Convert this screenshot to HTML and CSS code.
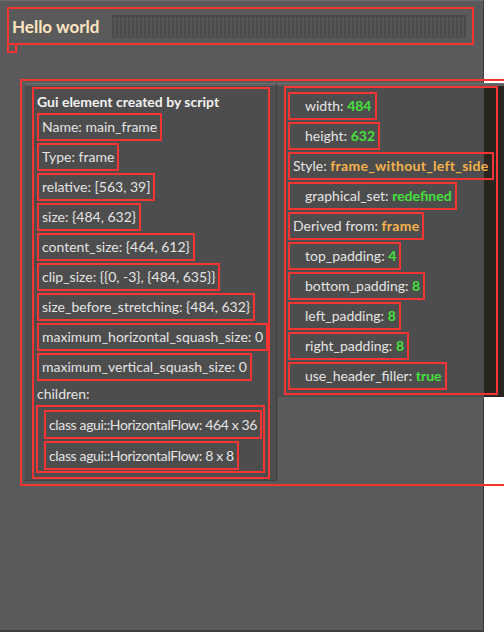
FILE: index.html
```html
<!DOCTYPE html>
<html>
<head>
<meta charset="utf-8">
<link rel="stylesheet" href="styles.css">
</head>
<body>
<div class="frame">
  <div class="titlebar">
    <span class="title">Hello world</span>
    <div class="filler"></div>
  </div>
  <div class="tiny"></div>
  <div class="content">
    <div class="panel panel-left">
      <div class="inner inner-left">
        <div class="header">Gui element created by script</div>
        <div class="row">Name: main_frame</div>
        <div class="row">Type: frame</div>
        <div class="row">relative: [563, 39]</div>
        <div class="row">size: {484, 632}</div>
        <div class="row">content_size: {464, 612}</div>
        <div class="row">clip_size: {{0, -3}, {484, 635}}</div>
        <div class="row">size_before_stretching: {484, 632}</div>
        <div class="row">maximum_horizontal_squash_size: 0</div>
        <div class="row">maximum_vertical_squash_size: 0</div>
        <div class="plain">children:</div>
        <div class="children">
          <div class="row child">class agui::HorizontalFlow: 464 x 36</div>
          <div class="row child">class agui::HorizontalFlow: 8 x 8</div>
        </div>
      </div>
    </div>
    <div class="panel panel-right">
      <div class="inner inner-right">
        <div class="row ind">width: <b class="g">484</b></div>
        <div class="row ind">height: <b class="g">632</b></div>
        <div class="row">Style: <b class="o">frame_without_left_side</b></div>
        <div class="row ind">graphical_set: <b class="g">redefined</b></div>
        <div class="row">Derived from: <b class="o">frame</b></div>
        <div class="row ind">top_padding: <b class="g">4</b></div>
        <div class="row ind">bottom_padding: <b class="g">8</b></div>
        <div class="row ind">left_padding: <b class="g">8</b></div>
        <div class="row ind">right_padding: <b class="g">8</b></div>
        <div class="row ind">use_header_filler: <b class="g">true</b></div>
      </div>
    </div>
  </div>
</div>
</body>
</html>
```

FILE: styles.css
```css
html, body {
  margin: 0;
  padding: 0;
  background: #ffffff;
  overflow: hidden;
}

body {
  width: 504px;
  height: 632px;
  font-family: "Lato", "Open Sans", sans-serif;
  font-size: 14px;
  color: #e4e4e4;
}

.frame {
  width: 484px;
  height: 632px;
  box-sizing: border-box;
  background: #5a5a5a;
  border-top: 1px solid #6c6c6c;
  border-right: 1px solid #3e3b39;
  border-bottom: 2px solid #3f3f3f;
  padding-top: 6px;
}

.titlebar {
  margin-left: 7px;
  width: 467px;
  height: 38px;
  box-sizing: border-box;
  border: 2px solid #f73434;
  display: flex;
  align-items: center;
}

.title {
  width: 103px;
  padding-left: 3px;
  box-sizing: border-box;
  font-weight: bold;
  font-size: 17px;
  color: #ffe6c0;
  white-space: nowrap;
}

.filler {
  flex: 1;
  height: 23px;
  margin-right: 6px;
  background: repeating-linear-gradient(90deg, #4b4b4b 0 2px, #555555 2px 4px);
  box-shadow: inset 0 2px 0 #4a4a4a;
}

.tiny {
  margin-left: 7px;
  margin-top: -2px;
  width: 10px;
  height: 10px;
  box-sizing: border-box;
  border: 2px solid #f73434;
}

.content {
  margin-top: 26px;
  margin-left: 20px;
  width: 486px;
  height: 407px;
  box-sizing: border-box;
  border: 2px solid #f73434;
  padding: 2px 0 0 3px;
  display: flex;
  align-items: flex-start;
}

.panel {
  box-sizing: border-box;
  border-top: 1px solid #727272;
  box-shadow: inset 0 2px 0 #5e5e5e;
}

.panel-left {
  width: 252px;
  height: 397px;
  background: #4d4d4d;
  padding: 3px 7px 0 7px;
  border-right: 1px solid #3f3f3f;
  box-shadow: inset 0 2px 0 #5e5e5e, 0 1px 1px #444;
}

.panel-right {
  flex: 1;
  height: 314px;
  background: linear-gradient(90deg, #4d4d4d 0 207px, #28251f 207px);
  padding: 2px 0 0 7px;
}

.inner {
  box-sizing: border-box;
  border: 2px solid #f73434;
  display: flex;
  flex-direction: column;
  align-items: flex-start;
}

.inner-left {
  width: 238px;
  height: 392px;
  padding: 0 0 0 3px;
}

.inner-right {
  width: 214px;
  height: 309px;
  padding: 4px 0 0 2px;
}

.header {
  height: 24px;
  line-height: 25px;
  margin-bottom: 0;
  font-weight: bold;
  color: #f2f2f2;
  white-space: nowrap;
}

.row {
  height: 28px;
  box-sizing: border-box;
  border: 2px solid #f73434;
  padding: 0 3px;
  line-height: 24px;
  margin-bottom: 2px;
  white-space: nowrap;
}

.row.ind {
  padding-left: 15px;
}

.plain {
  height: 22px;
  line-height: 22px;
  margin-bottom: 0;
  white-space: nowrap;
}

.children {
  margin-left: -1px;
  width: 229px;
  height: 68px;
  box-sizing: border-box;
  border: 2px solid #f73434;
  padding: 3px 0 0 6px;
  display: flex;
  flex-direction: column;
  align-items: flex-start;
}

.row.child {
  height: 29px;
  line-height: 25px;
  padding: 0 3px;
  letter-spacing: -0.35px;
}

.g {
  color: #45e03c;
  font-weight: bold;
}

.o {
  color: #f5b24c;
  font-weight: bold;
  letter-spacing: 0.3px;
}
```
